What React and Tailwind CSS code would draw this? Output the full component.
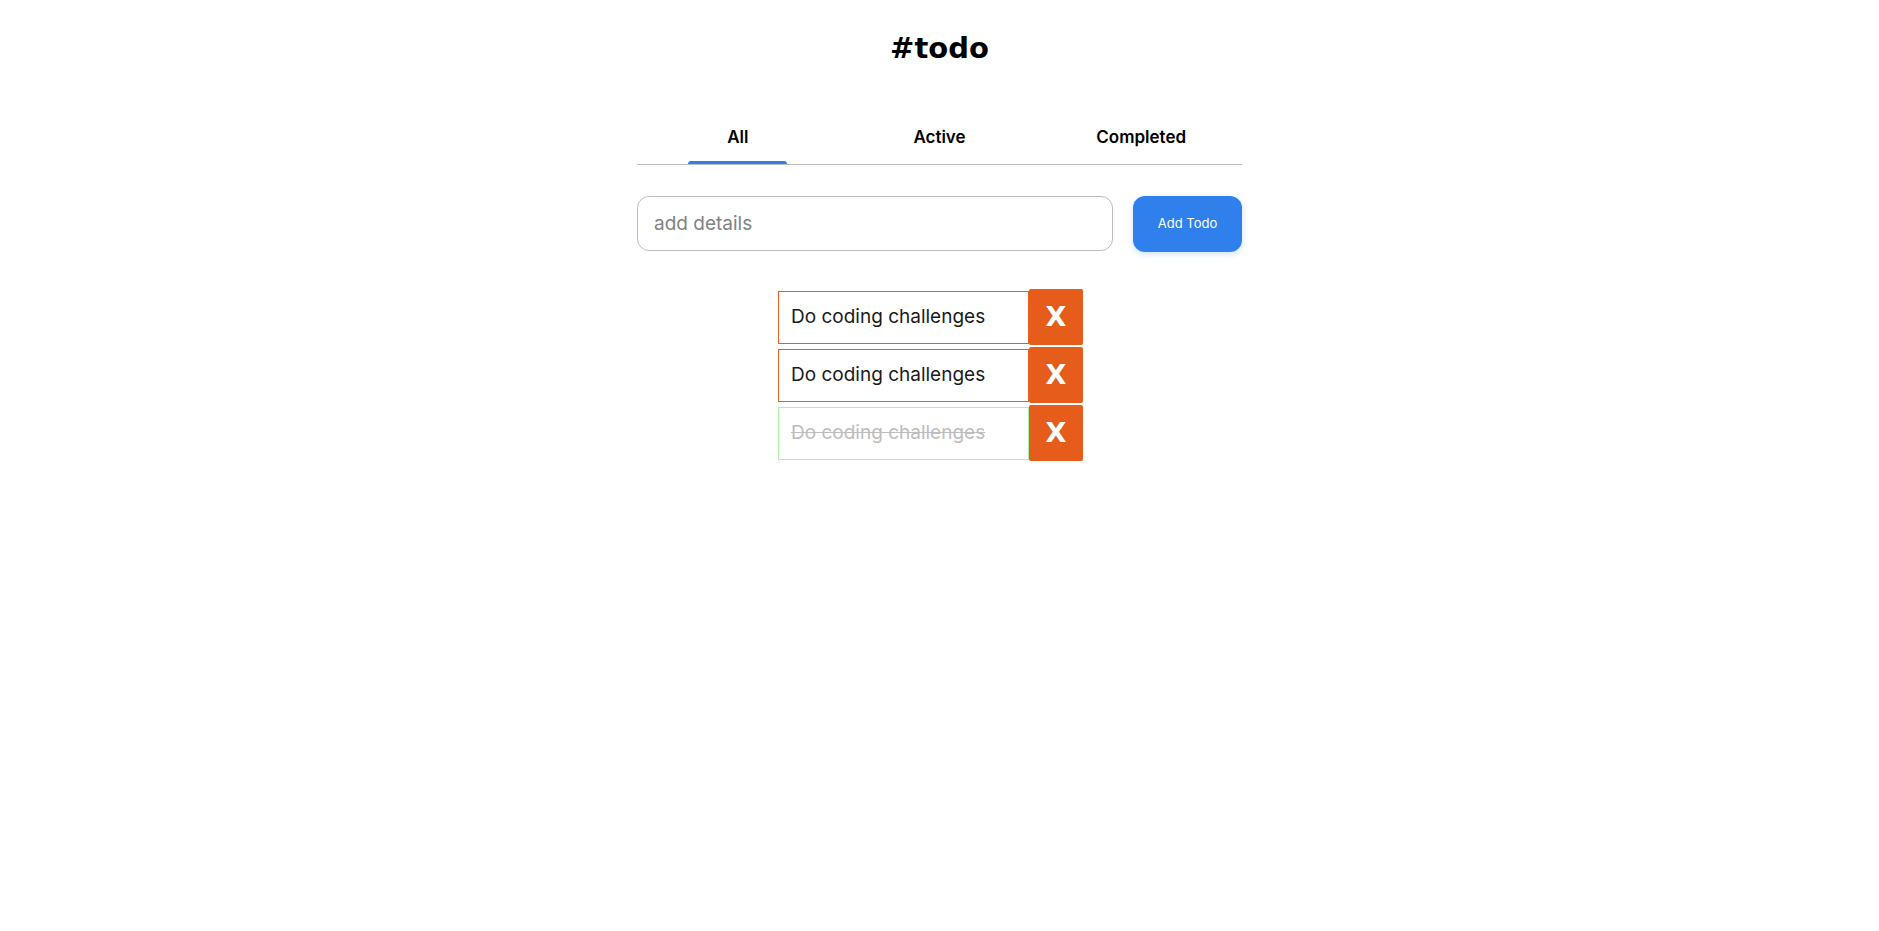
import React from "react";

const todos = [
  { text: "Do coding challenges", done: false },
  { text: "Do coding challenges", done: false },
  { text: "Do coding challenges", done: true },
];

export default function App() {
  return (
    <div className="min-h-screen bg-white" style={{ fontFamily: "Inter, 'Noto Sans', sans-serif" }}>
      <div className="mx-auto w-[605px] flex flex-col">
        <div className="h-[96px] flex items-center justify-center">
          <h1 className="text-[29px] leading-[36px] font-bold text-black font-['DejaVu_Sans',sans-serif]">#todo</h1>
        </div>
        <div className="flex border-b border-[#bdbdbd]">
          {["All", "Active", "Completed"].map((t, i) => (
            <div key={t} className="flex-1 flex flex-col items-center">
              <div className="pt-[29px] pb-[12px] text-[17px] leading-[24px] font-semibold text-black">{t}</div>
              <div className={"w-[99px] h-[3px] rounded-t-[4px] " + (i === 0 ? "bg-[#2f80ed]" : "bg-transparent")} />
            </div>
          ))}
        </div>
        <div className="flex gap-[20px] mt-[31px]">
          <input
            className="w-[476px] h-[55px] rounded-[12px] border border-[#bdbdbd] px-[16px] text-[19px] text-[#333] placeholder:text-[#828282] outline-none"
            placeholder="add details"
          />
          <button className="w-[109px] h-[56px] rounded-[12px] bg-[#2f80ed] text-white text-[13px] shadow-[0_2px_6px_rgba(127,177,243,0.4)]">
            Add Todo
          </button>
        </div>
        <div className="flex flex-col gap-[2px] mt-[37px] ml-[141px]">
          {todos.map((t, i) => (
            <div key={i} className="flex items-center">
              <div
                className={
                  "w-[251px] h-[53px] border flex items-center px-[12px] text-[19px] " +
                  (t.done
                    ? "border-[#a9f4a0] text-[#bdbdbd] line-through"
                    : "border-[#e85d1c] text-[#1a1a1a]")
                }
              >
                {t.text}
              </div>
              <button className="w-[54px] h-[56px] rounded-[2px] bg-[#e65c1a] text-white flex items-center justify-center pb-[2px] text-[27px] leading-none font-bold font-['DejaVu_Sans',sans-serif]">
                X
              </button>
            </div>
          ))}
        </div>
      </div>
    </div>
  );
}
